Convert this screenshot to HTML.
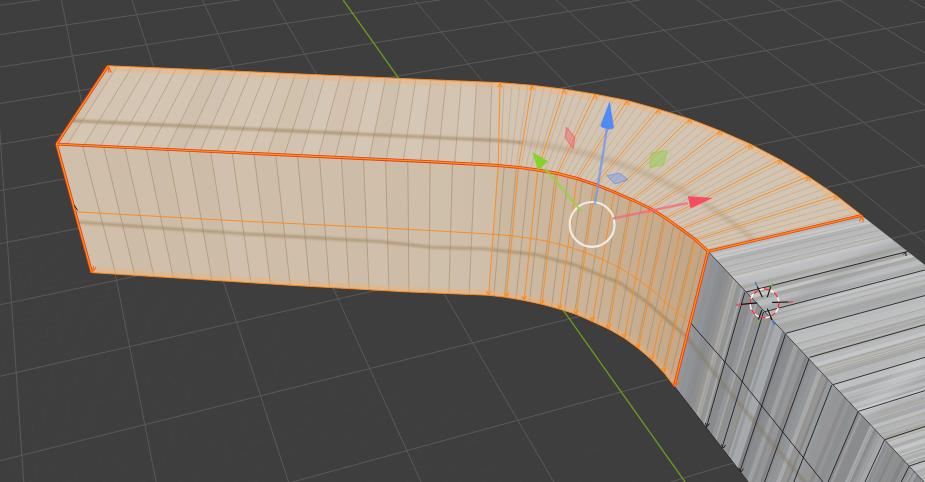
<!DOCTYPE html>
<html><head><meta charset="utf-8"><title>viewport</title>
<style>html,body{margin:0;padding:0;background:#3e3e3e;overflow:hidden}svg{display:block}</style></head>
<body><svg width="925" height="482" viewBox="0 0 925 482">
<rect width="925" height="482" fill="#3e3e3e"/>
<defs>
<linearGradient id="fade" gradientUnits="userSpaceOnUse" x1="320" y1="160" x2="260" y2="350"><stop offset="0" stop-color="#fff" stop-opacity="0"/><stop offset="1" stop-color="#fff" stop-opacity="1"/></linearGradient>
<mask id="subm"><rect width="925" height="482" fill="url(#fade)"/></mask>
<filter id="b2" x="-10%" y="-50%" width="120%" height="200%"><feGaussianBlur stdDeviation="2.2"/></filter>
<filter id="b1" x="-10%" y="-50%" width="120%" height="200%"><feGaussianBlur stdDeviation="0.9"/></filter>
<filter id="b4" x="-10%" y="-50%" width="120%" height="200%"><feGaussianBlur stdDeviation="5"/></filter>
</defs>
<g id="grid">
<path d="M-6.0 406.1L-2.5 488.0M-6.0 183.9L10.8 488.0M-2.5 -6.0L37.4 488.0M4.4 -6.0L50.7 488.0M11.4 -6.0L64.0 488.0M18.4 -6.0L77.4 488.0M25.4 -6.0L90.7 488.0M-6.0 -4.8L3.2 -6.0M32.3 -6.0L104.0 488.0M-6.0 -2.1L22.9 -6.0M39.3 -6.0L117.3 488.0M-6.0 0.6L42.7 -6.0M46.3 -6.0L130.6 488.0M-6.0 3.4L62.5 -6.0M53.3 -6.0L143.9 488.0M-6.0 8.9L102.0 -6.0M67.2 -6.0L170.6 488.0M-6.0 11.8L121.8 -6.0M74.2 -6.0L183.9 488.0M-6.0 14.6L141.6 -6.0M81.2 -6.0L197.2 488.0M-6.0 17.5L161.4 -6.0M88.2 -6.0L210.6 488.0M-6.0 20.4L181.2 -6.0M95.1 -6.0L223.9 488.0M-6.0 23.4L201.0 -6.0M102.1 -6.0L237.2 488.0M-6.0 26.3L220.8 -6.0M109.1 -6.0L250.5 488.0M-6.0 29.3L240.6 -6.0M116.1 -6.0L263.9 488.0M-6.0 32.4L260.4 -6.0M123.1 -6.0L277.2 488.0M-6.0 38.5L300.0 -6.0M137.0 -6.0L303.8 488.0M-6.0 41.7L319.8 -6.0M144.0 -6.0L317.2 488.0M-6.0 44.8L339.6 -6.0M151.0 -6.0L330.5 488.0M-6.0 48.0L359.4 -6.0M158.0 -6.0L343.8 488.0M-6.0 51.3L379.2 -6.0M164.9 -6.0L357.2 488.0M-6.0 54.6L399.1 -6.0M171.9 -6.0L370.5 488.0M-6.0 57.9L418.9 -6.0M178.9 -6.0L383.8 488.0M-6.0 61.2L438.7 -6.0M185.9 -6.0L397.1 488.0M-6.0 64.6L458.5 -6.0M192.9 -6.0L410.5 488.0M-6.0 71.5L498.2 -6.0M206.8 -6.0L437.1 488.0M-6.0 75.0L518.0 -6.0M213.8 -6.0L450.5 488.0M-6.0 78.5L537.9 -6.0M220.8 -6.0L463.8 488.0M-6.0 82.1L557.7 -6.0M227.8 -6.0L477.2 488.0M-6.0 85.7L577.6 -6.0M234.8 -6.0L490.5 488.0M-6.0 89.3L597.4 -6.0M241.8 -6.0L503.8 488.0M-6.0 93.0L617.3 -6.0M248.8 -6.0L517.2 488.0M-6.0 96.8L637.1 -6.0M255.7 -6.0L530.5 488.0M-6.0 100.6L657.0 -6.0M262.7 -6.0L543.8 488.0M-6.0 108.3L696.7 -6.0M276.7 -6.0L570.5 488.0M-6.0 112.2L716.6 -6.0M283.7 -6.0L583.9 488.0M-6.0 116.2L736.4 -6.0M290.7 -6.0L597.2 488.0M-6.0 120.2L756.3 -6.0M297.7 -6.0L610.5 488.0M-6.0 124.3L776.2 -6.0M304.7 -6.0L623.9 488.0M-6.0 128.4L796.0 -6.0M311.6 -6.0L637.2 488.0M-6.0 132.5L815.9 -6.0M318.6 -6.0L650.6 488.0M-6.0 136.8L835.8 -6.0M325.6 -6.0L663.9 488.0M-6.0 141.0L855.7 -6.0M332.6 -6.0L677.3 488.0M-6.0 149.7L895.5 -6.0M346.6 -6.0L704.0 488.0M-6.0 154.2L915.4 -6.0M353.6 -6.0L717.3 488.0M-6.0 158.7L931.0 -5.3M360.6 -6.0L730.7 488.0M-6.0 163.2L931.0 -1.7M367.6 -6.0L744.0 488.0M-6.0 167.8L931.0 1.8M374.6 -6.0L757.4 488.0M-6.0 172.5L931.0 5.4M381.6 -6.0L770.7 488.0M-6.0 177.2L931.0 9.1M388.5 -6.0L784.1 488.0M-6.0 182.0L931.0 12.7M395.5 -6.0L797.4 488.0M-6.0 186.9L931.0 16.5M402.5 -6.0L810.8 488.0M-6.0 196.8L931.0 24.1M416.5 -6.0L837.5 488.0M-6.0 201.8L931.0 28.0M423.5 -6.0L850.8 488.0M-6.0 206.9L931.0 32.0M430.5 -6.0L864.2 488.0M-6.0 212.1L931.0 36.0M437.5 -6.0L877.5 488.0M-6.0 217.4L931.0 40.0M444.5 -6.0L890.9 488.0M-6.0 222.7L931.0 44.2M451.5 -6.0L904.2 488.0M-6.0 228.2L931.0 48.3M458.5 -6.0L917.6 488.0M-6.0 233.7L931.0 52.6M465.5 -6.0L931.0 488.0M-6.0 239.2L931.0 56.9M472.5 -6.0L931.0 474.1M-6.0 250.6L931.0 65.6M486.5 -6.0L931.0 447.2M-6.0 256.4L931.0 70.1M493.5 -6.0L931.0 434.3M-6.0 262.3L931.0 74.7M500.5 -6.0L931.0 421.7M-6.0 268.3L931.0 79.3M507.5 -6.0L931.0 409.4M-6.0 274.4L931.0 83.9M514.5 -6.0L931.0 397.5M-6.0 280.5L931.0 88.7M521.5 -6.0L931.0 385.8M-6.0 286.8L931.0 93.5M528.5 -6.0L931.0 374.4M-6.0 293.1L931.0 98.4M535.5 -6.0L931.0 363.3M-6.0 299.6L931.0 103.4M542.5 -6.0L931.0 352.4M-6.0 312.8L931.0 113.6M556.5 -6.0L931.0 331.5M-6.0 319.5L931.0 118.8M563.5 -6.0L931.0 321.4M-6.0 326.4L931.0 124.1M570.5 -6.0L931.0 311.5M-6.0 333.4L931.0 129.4M577.5 -6.0L931.0 301.8M-6.0 340.5L931.0 134.9M584.5 -6.0L931.0 292.4M-6.0 347.7L931.0 140.5M591.5 -6.0L931.0 283.2M-6.0 355.0L931.0 146.1M598.5 -6.0L931.0 274.1M-6.0 362.4L931.0 151.8M605.5 -6.0L931.0 265.3M-6.0 370.0L931.0 157.7M612.5 -6.0L931.0 256.6M-6.0 385.5L931.0 169.6M626.5 -6.0L931.0 239.8M-6.0 393.4L931.0 175.7M633.5 -6.0L931.0 231.7M-6.0 401.5L931.0 182.0M640.5 -6.0L931.0 223.7M-6.0 409.7L931.0 188.3M647.5 -6.0L931.0 215.9M-6.0 418.1L931.0 194.8M654.5 -6.0L931.0 208.3M-6.0 426.6L931.0 201.3M661.5 -6.0L931.0 200.8M-6.0 435.3L931.0 208.0M668.5 -6.0L931.0 193.4M-6.0 444.1L931.0 214.8M675.5 -6.0L931.0 186.2M-6.0 453.1L931.0 221.7M682.5 -6.0L931.0 179.2M-6.0 471.5L931.0 236.0M696.6 -6.0L931.0 165.4M-6.0 481.0L931.0 243.3M703.6 -6.0L931.0 158.7M4.4 488.0L931.0 250.7M710.6 -6.0L931.0 152.2M42.4 488.0L931.0 258.3M717.6 -6.0L931.0 145.8M80.4 488.0L931.0 266.0M724.6 -6.0L931.0 139.4M118.4 488.0L931.0 273.9M731.6 -6.0L931.0 133.2M156.4 488.0L931.0 282.0M738.6 -6.0L931.0 127.1M194.4 488.0L931.0 290.2M745.6 -6.0L931.0 121.2M232.5 488.0L931.0 298.5M752.6 -6.0L931.0 115.3M308.5 488.0L931.0 315.8M766.7 -6.0L931.0 103.8M346.5 488.0L931.0 324.6M773.7 -6.0L931.0 98.2M384.6 488.0L931.0 333.7M780.7 -6.0L931.0 92.7M422.6 488.0L931.0 343.0M787.7 -6.0L931.0 87.3M460.7 488.0L931.0 352.4M794.7 -6.0L931.0 82.0M498.7 488.0L931.0 362.1M801.7 -6.0L931.0 76.8M536.8 488.0L931.0 371.9M808.7 -6.0L931.0 71.7M574.9 488.0L931.0 382.0M815.7 -6.0L931.0 66.6M612.9 488.0L931.0 392.3M822.8 -6.0L931.0 61.7M689.1 488.0L931.0 413.6M836.8 -6.0L931.0 52.0M727.2 488.0L931.0 424.6M843.8 -6.0L931.0 47.2M765.3 488.0L931.0 435.8M850.8 -6.0L931.0 42.6M803.4 488.0L931.0 447.4M857.8 -6.0L931.0 38.0M841.5 488.0L931.0 459.2M864.9 -6.0L931.0 33.4M879.6 488.0L931.0 471.2M871.9 -6.0L931.0 29.0M917.7 488.0L931.0 483.6M878.9 -6.0L931.0 24.6M885.9 -6.0L931.0 20.3M892.9 -6.0L931.0 16.0M907.0 -6.0L931.0 7.7M914.0 -6.0L931.0 3.6M921.0 -6.0L931.0 -0.4M928.0 -6.0L931.0 -4.3" stroke="#4c4c4c" stroke-width="0.7" opacity="0.3" fill="none" mask="url(#subm)"/>
<path d="M-6.0 45.5L24.1 488.0M-6.0 6.1L82.3 -6.0M60.3 -6.0L157.3 488.0M-6.0 35.4L280.2 -6.0M130.0 -6.0L290.5 488.0M-6.0 68.0L478.4 -6.0M199.9 -6.0L423.8 488.0M-6.0 104.4L676.8 -6.0M269.7 -6.0L557.2 488.0M-6.0 145.4L875.6 -6.0M-6.0 191.8L931.0 20.3M409.5 -6.0L824.1 488.0M-6.0 244.9L931.0 61.2M479.5 -6.0L931.0 460.4M-6.0 306.1L931.0 108.4M549.5 -6.0L931.0 341.8M-6.0 377.6L931.0 163.6M619.5 -6.0L931.0 248.1M-6.0 462.2L931.0 228.8M689.6 -6.0L931.0 172.2M270.5 488.0L931.0 307.1M759.7 -6.0L931.0 109.5M651.0 488.0L931.0 402.8M829.8 -6.0L931.0 56.8M899.9 -6.0L931.0 11.8" stroke="#5a5a5a" stroke-width="1" fill="none"/>
<line x1="343.2" y1="0" x2="685.1" y2="482" stroke="#699b1d" stroke-width="1.3"/>
</g>
<clipPath id="ctop"><polygon points="108.1,65.8 230.0,70.9 420.0,79.3 500.0,82.7 532.0,85.3 564.0,89.2 595.0,94.2 627.0,100.5 658.4,109.2 689.7,119.0 720.0,130.8 750.5,144.2 780.0,159.7 808.2,176.5 836.2,195.5 861.8,215.4 708.1,251.3 695.5,239.7 681.0,229.0 665.7,218.1 649.3,208.0 632.0,199.8 614.2,192.0 595.6,184.6 576.9,178.5 557.5,173.5 537.9,170.0 518.4,167.4 498.2,165.5 430.0,161.7 230.0,152.4 56.5,144.1"/></clipPath>
<clipPath id="cfront"><polygon points="56.5,144.1 230.0,152.4 430.0,161.7 498.2,165.5 518.4,167.4 537.9,170.0 557.5,173.5 576.9,178.5 595.6,184.6 614.2,192.0 632.0,199.8 649.3,208.0 665.7,218.1 681.0,229.0 695.5,239.7 708.1,251.3 674.3,386.2 663.9,372.5 651.9,360.0 638.3,348.3 624.3,338.0 608.6,328.9 592.4,321.5 576.0,314.2 559.6,309.1 541.9,304.2 524.1,300.4 506.3,297.3 488.6,295.2 403.8,291.7 300.0,285.8 91.7,272.6"/></clipPath>
<polygon points="108.1,65.8 230.0,70.9 420.0,79.3 500.0,82.7 532.0,85.3 564.0,89.2 595.0,94.2 627.0,100.5 658.4,109.2 689.7,119.0 720.0,130.8 750.5,144.2 780.0,159.7 808.2,176.5 836.2,195.5 861.8,215.4 708.1,251.3 695.5,239.7 681.0,229.0 665.7,218.1 649.3,208.0 632.0,199.8 614.2,192.0 595.6,184.6 576.9,178.5 557.5,173.5 537.9,170.0 518.4,167.4 498.2,165.5 430.0,161.7 230.0,152.4 56.5,144.1" fill="#d4c5b3"/>
<linearGradient id="fg" gradientUnits="userSpaceOnUse" x1="460" y1="0" x2="705" y2="0"><stop offset="0" stop-color="#c8ac8c" stop-opacity="0"/><stop offset="0.55" stop-color="#c8ac8c" stop-opacity="0.65"/><stop offset="1" stop-color="#c2a380" stop-opacity="0.95"/></linearGradient>
<polygon points="56.5,144.1 230.0,152.4 430.0,161.7 498.2,165.5 518.4,167.4 537.9,170.0 557.5,173.5 576.9,178.5 595.6,184.6 614.2,192.0 632.0,199.8 649.3,208.0 665.7,218.1 681.0,229.0 695.5,239.7 708.1,251.3 674.3,386.2 663.9,372.5 651.9,360.0 638.3,348.3 624.3,338.0 608.6,328.9 592.4,321.5 576.0,314.2 559.6,309.1 541.9,304.2 524.1,300.4 506.3,297.3 488.6,295.2 403.8,291.7 300.0,285.8 91.7,272.6" fill="#cfbfab"/>
<polygon points="56.5,144.1 230.0,152.4 430.0,161.7 498.2,165.5 518.4,167.4 537.9,170.0 557.5,173.5 576.9,178.5 595.6,184.6 614.2,192.0 632.0,199.8 649.3,208.0 665.7,218.1 681.0,229.0 695.5,239.7 708.1,251.3 674.3,386.2 663.9,372.5 651.9,360.0 638.3,348.3 624.3,338.0 608.6,328.9 592.4,321.5 576.0,314.2 559.6,309.1 541.9,304.2 524.1,300.4 506.3,297.3 488.6,295.2 403.8,291.7 300.0,285.8 91.7,272.6" fill="url(#fg)"/>
<g clip-path="url(#ctop)">
<polyline points="71.9,120.6 132.9,123.5 193.9,126.3 254.9,129.1 315.9,132.0 376.8,134.8 437.8,137.7 498.7,140.5 522.5,142.8" stroke="#8a6c3a" stroke-width="2.8" fill="none" opacity="0.5" filter="url(#b1)"/>
<polyline points="522.5,142.8 545.7,145.8 568.8,149.7 591.9,155.1 614.4,162.0 636.9,170.1 658.4,179.1 679.7,188.9 700.0,200.6 719.2,213.2 737.7,226.4 754.2,240.5" stroke="#8a6c3a" stroke-width="4.5" fill="none" opacity="0.25" filter="url(#b2)"/>
<g stroke="#a58a64" stroke-width="0.9" opacity="0.62">
<polygon points="50.7,143.8 102.6,65.6 117.3,66.2 67.2,144.6" fill="#8a6a40" fill-opacity="0.059" stroke="none"/>
<line x1="67.2" y1="144.6" x2="117.3" y2="66.2" />
<polygon points="67.2,144.6 117.3,66.2 132.0,66.8 83.7,145.4" fill="#ffffff" fill-opacity="0.039" stroke="none"/>
<line x1="83.7" y1="145.4" x2="132.0" y2="66.8" />
<polygon points="83.7,145.4 132.0,66.8 146.8,67.5 100.3,146.2" fill="#8a6a40" fill-opacity="0.009" stroke="none"/>
<line x1="100.3" y1="146.2" x2="146.8" y2="67.5" />
<polygon points="100.3,146.2 146.8,67.5 161.5,68.1 116.9,147.0" fill="#ffffff" fill-opacity="0.031" stroke="none"/>
<line x1="116.9" y1="147.0" x2="161.5" y2="68.1" />
<polygon points="116.9,147.0 161.5,68.1 176.3,68.7 133.5,147.8" fill="#ffffff" fill-opacity="0.067" stroke="none"/>
<line x1="133.5" y1="147.8" x2="176.3" y2="68.7" />
<polygon points="133.5,147.8 176.3,68.7 191.1,69.4 150.2,148.6" fill="#ffffff" fill-opacity="0.005" stroke="none"/>
<line x1="150.2" y1="148.6" x2="191.1" y2="69.4" />
<polygon points="150.2,148.6 191.1,69.4 205.9,70.0 166.8,149.4" fill="#ffffff" fill-opacity="0.000" stroke="none"/>
<line x1="166.8" y1="149.4" x2="205.9" y2="70.0" />
<polygon points="166.8,149.4 205.9,70.0 220.8,70.7 183.5,150.2" fill="#8a6a40" fill-opacity="0.060" stroke="none"/>
<line x1="183.5" y1="150.2" x2="220.8" y2="70.7" />
<polygon points="183.5,150.2 220.8,70.7 235.7,71.3 200.3,151.0" fill="#8a6a40" fill-opacity="0.032" stroke="none"/>
<line x1="200.3" y1="151.0" x2="235.7" y2="71.3" />
<polygon points="200.3,151.0 235.7,71.3 250.6,71.9 217.0,151.8" fill="#8a6a40" fill-opacity="0.000" stroke="none"/>
<line x1="217.0" y1="151.8" x2="250.6" y2="71.9" />
<polygon points="217.0,151.8 250.6,71.9 265.5,72.6 233.8,152.6" fill="#ffffff" fill-opacity="0.025" stroke="none"/>
<line x1="233.8" y1="152.6" x2="265.5" y2="72.6" />
<polygon points="233.8,152.6 265.5,72.6 280.4,73.2 250.6,153.4" fill="#ffffff" fill-opacity="0.043" stroke="none"/>
<line x1="250.6" y1="153.4" x2="280.4" y2="73.2" />
<polygon points="250.6,153.4 280.4,73.2 295.4,73.9 267.5,154.2" fill="#8a6a40" fill-opacity="0.017" stroke="none"/>
<line x1="267.5" y1="154.2" x2="295.4" y2="73.9" />
<polygon points="267.5,154.2 295.4,73.9 310.4,74.5 284.4,155.0" fill="#8a6a40" fill-opacity="0.061" stroke="none"/>
<line x1="284.4" y1="155.0" x2="310.4" y2="74.5" />
<polygon points="284.4,155.0 310.4,74.5 325.4,75.2 301.3,155.8" fill="#8a6a40" fill-opacity="0.030" stroke="none"/>
<line x1="301.3" y1="155.8" x2="325.4" y2="75.2" />
<polygon points="301.3,155.8 325.4,75.2 340.4,75.8 318.2,156.7" fill="#ffffff" fill-opacity="0.057" stroke="none"/>
<line x1="318.2" y1="156.7" x2="340.4" y2="75.8" />
<polygon points="318.2,156.7 340.4,75.8 355.4,76.5 335.1,157.5" fill="#8a6a40" fill-opacity="0.040" stroke="none"/>
<line x1="335.1" y1="157.5" x2="355.4" y2="76.5" />
<polygon points="335.1,157.5 355.4,76.5 370.5,77.1 352.1,158.3" fill="#8a6a40" fill-opacity="0.007" stroke="none"/>
<line x1="352.1" y1="158.3" x2="370.5" y2="77.1" />
<polygon points="352.1,158.3 370.5,77.1 385.6,77.8 369.2,159.1" fill="#ffffff" fill-opacity="0.060" stroke="none"/>
<line x1="369.2" y1="159.1" x2="385.6" y2="77.8" />
<polygon points="369.2,159.1 385.6,77.8 400.7,78.4 386.2,159.9" fill="#8a6a40" fill-opacity="0.067" stroke="none"/>
<line x1="386.2" y1="159.9" x2="400.7" y2="78.4" />
<polygon points="386.2,159.9 400.7,78.4 415.8,79.1 403.3,160.7" fill="#ffffff" fill-opacity="0.014" stroke="none"/>
<line x1="403.3" y1="160.7" x2="415.8" y2="79.1" />
<polygon points="403.3,160.7 415.8,79.1 431.0,79.7 420.4,161.6" fill="#ffffff" fill-opacity="0.063" stroke="none"/>
<line x1="420.4" y1="161.6" x2="431.0" y2="79.7" />
<polygon points="420.4,161.6 431.0,79.7 446.2,80.4 437.5,162.4" fill="#8a6a40" fill-opacity="0.038" stroke="none"/>
<line x1="437.5" y1="162.4" x2="446.2" y2="80.4" />
<polygon points="437.5,162.4 446.2,80.4 461.4,81.0 454.7,163.2" fill="#ffffff" fill-opacity="0.007" stroke="none"/>
<line x1="454.7" y1="163.2" x2="461.4" y2="81.0" />
<polygon points="454.7,163.2 461.4,81.0 476.6,81.7 471.8,164.0" fill="#ffffff" fill-opacity="0.057" stroke="none"/>
<line x1="471.8" y1="164.0" x2="476.6" y2="81.7" />
<polygon points="471.8,164.0 476.6,81.7 491.8,82.3 489.1,164.9" fill="#8a6a40" fill-opacity="0.051" stroke="none"/>
<line x1="489.1" y1="164.9" x2="491.8" y2="82.3" />
<polygon points="489.1,164.9 491.8,82.3 507.1,83.0 506.3,165.7" fill="#ffffff" fill-opacity="0.003" stroke="none"/>
</g>
<g stroke="#a58a64" stroke-width="0.8" opacity="0.4">
<line x1="500.7" y1="165.7" x2="504.0" y2="83.0" />
<line x1="505.8" y1="166.2" x2="512.0" y2="83.7" />
<line x1="510.8" y1="166.7" x2="520.0" y2="84.3" />
<line x1="515.9" y1="167.2" x2="528.0" y2="85.0" />
<line x1="520.8" y1="167.7" x2="536.0" y2="85.8" />
<line x1="525.7" y1="168.4" x2="544.0" y2="86.8" />
<line x1="530.6" y1="169.0" x2="552.0" y2="87.7" />
<line x1="535.5" y1="169.7" x2="560.0" y2="88.7" />
<line x1="540.4" y1="170.4" x2="567.9" y2="89.8" />
<line x1="545.2" y1="171.3" x2="575.6" y2="91.1" />
<line x1="550.1" y1="172.2" x2="583.4" y2="92.3" />
<line x1="555.0" y1="173.1" x2="591.1" y2="93.6" />
<line x1="559.9" y1="174.1" x2="599.0" y2="95.0" />
<line x1="564.8" y1="175.4" x2="607.0" y2="96.6" />
<line x1="569.6" y1="176.6" x2="615.0" y2="98.1" />
<line x1="574.5" y1="177.9" x2="623.0" y2="99.7" />
<line x1="579.2" y1="179.3" x2="630.9" y2="101.6" />
<line x1="583.9" y1="180.8" x2="638.8" y2="103.8" />
<line x1="588.6" y1="182.3" x2="646.6" y2="105.9" />
<line x1="593.3" y1="183.8" x2="654.5" y2="108.1" />
<line x1="597.9" y1="185.5" x2="662.3" y2="110.4" />
<line x1="602.6" y1="187.4" x2="670.1" y2="112.9" />
<line x1="607.2" y1="189.2" x2="678.0" y2="115.3" />
<line x1="611.9" y1="191.1" x2="685.8" y2="117.8" />
<line x1="616.4" y1="193.0" x2="693.5" y2="120.5" />
<line x1="620.9" y1="194.9" x2="701.1" y2="123.4" />
<line x1="625.3" y1="196.9" x2="708.6" y2="126.4" />
<line x1="629.8" y1="198.8" x2="716.2" y2="129.3" />
<line x1="634.2" y1="200.8" x2="723.8" y2="132.5" />
<line x1="638.5" y1="202.9" x2="731.4" y2="135.8" />
<line x1="642.8" y1="204.9" x2="739.1" y2="139.2" />
<line x1="647.1" y1="207.0" x2="746.7" y2="142.5" />
<line x1="651.3" y1="209.3" x2="754.2" y2="146.1" />
<line x1="655.5" y1="211.8" x2="761.6" y2="150.0" />
<line x1="659.5" y1="214.3" x2="768.9" y2="153.9" />
<line x1="663.7" y1="216.8" x2="776.3" y2="157.8" />
<line x1="667.6" y1="219.5" x2="783.5" y2="161.8" />
<line x1="671.4" y1="222.2" x2="790.6" y2="166.0" />
<line x1="675.3" y1="224.9" x2="797.6" y2="170.2" />
<line x1="679.1" y1="227.6" x2="804.7" y2="174.4" />
<line x1="682.8" y1="230.3" x2="811.7" y2="178.9" />
<line x1="686.4" y1="233.0" x2="818.7" y2="183.6" />
<line x1="690.1" y1="235.7" x2="825.7" y2="188.4" />
<line x1="693.7" y1="238.4" x2="832.7" y2="193.1" />
<line x1="697.1" y1="241.1" x2="839.4" y2="198.0" />
<line x1="700.2" y1="244.1" x2="845.8" y2="203.0" />
<line x1="703.4" y1="246.9" x2="852.2" y2="207.9" />
<line x1="706.5" y1="249.9" x2="858.6" y2="212.9" />
</g>
<polyline points="108.1,65.8 230.0,70.9 420.0,79.3 500.0,82.7 532.0,85.3 564.0,89.2 595.0,94.2 627.0,100.5 658.4,109.2 689.7,119.0 720.0,130.8 750.5,144.2 780.0,159.7 808.2,176.5 836.2,195.5 861.8,215.4" stroke="#f0b27a" stroke-width="11" fill="none" opacity="0.42"/>
</g>
<g clip-path="url(#cfront)">
<polyline points="75.0,222.0 240.0,233.5 380.0,241.5 431.9,247.2 483.8,248.8 535.7,254.5 574.6,264.9 620.0,283.0 648.0,303.0 670.6,323.0 688.0,338.0" stroke="#8a6c3a" stroke-width="2.6" fill="none" opacity="0.47" filter="url(#b1)"/>
<g stroke="#a58a64" stroke-width="1" opacity="0.62">
<polygon points="40.2,143.3 85.6,299.3 104.1,300.2 61.3,144.3" fill="#ffffff" fill-opacity="0.035" stroke="none"/>
<polygon points="61.3,144.3 104.1,300.2 122.7,301.1 82.4,145.3" fill="#ffffff" fill-opacity="0.024" stroke="none"/>
<line x1="82.4" y1="145.3" x2="122.7" y2="301.1" />
<polygon points="82.4,145.3 122.7,301.1 141.3,302.0 103.6,146.4" fill="#8a6a40" fill-opacity="0.005" stroke="none"/>
<line x1="103.6" y1="146.4" x2="141.3" y2="302.0" />
<polygon points="103.6,146.4 141.3,302.0 160.0,302.9 124.8,147.4" fill="#8a6a40" fill-opacity="0.041" stroke="none"/>
<line x1="124.8" y1="147.4" x2="160.0" y2="302.9" />
<polygon points="124.8,147.4 160.0,302.9 178.8,303.8 146.2,148.4" fill="#8a6a40" fill-opacity="0.001" stroke="none"/>
<line x1="146.2" y1="148.4" x2="178.8" y2="303.8" />
<polygon points="146.2,148.4 178.8,303.8 197.6,304.7 167.6,149.4" fill="#8a6a40" fill-opacity="0.018" stroke="none"/>
<line x1="167.6" y1="149.4" x2="197.6" y2="304.7" />
<polygon points="167.6,149.4 197.6,304.7 216.5,305.6 189.1,150.5" fill="#8a6a40" fill-opacity="0.003" stroke="none"/>
<line x1="189.1" y1="150.5" x2="216.5" y2="305.6" />
<polygon points="189.1,150.5 216.5,305.6 235.5,306.5 210.6,151.5" fill="#8a6a40" fill-opacity="0.019" stroke="none"/>
<line x1="210.6" y1="151.5" x2="235.5" y2="306.5" />
<polygon points="210.6,151.5 235.5,306.5 254.5,307.4 232.2,152.5" fill="#ffffff" fill-opacity="0.047" stroke="none"/>
<line x1="232.2" y1="152.5" x2="254.5" y2="307.4" />
<polygon points="232.2,152.5 254.5,307.4 273.6,308.3 253.9,153.6" fill="#ffffff" fill-opacity="0.038" stroke="none"/>
<line x1="253.9" y1="153.6" x2="273.6" y2="308.3" />
<polygon points="253.9,153.6 273.6,308.3 292.8,309.2 275.7,154.6" fill="#8a6a40" fill-opacity="0.026" stroke="none"/>
<line x1="275.7" y1="154.6" x2="292.8" y2="309.2" />
<polygon points="275.7,154.6 292.8,309.2 312.0,310.1 297.5,155.7" fill="#ffffff" fill-opacity="0.010" stroke="none"/>
<line x1="297.5" y1="155.7" x2="312.0" y2="310.1" />
<polygon points="297.5,155.7 312.0,310.1 331.3,311.1 319.5,156.7" fill="#8a6a40" fill-opacity="0.031" stroke="none"/>
<line x1="319.5" y1="156.7" x2="331.3" y2="311.1" />
<polygon points="319.5,156.7 331.3,311.1 350.6,312.0 341.4,157.8" fill="#8a6a40" fill-opacity="0.007" stroke="none"/>
<line x1="341.4" y1="157.8" x2="350.6" y2="312.0" />
<polygon points="341.4,157.8 350.6,312.0 370.0,312.9 363.5,158.8" fill="#8a6a40" fill-opacity="0.021" stroke="none"/>
<line x1="363.5" y1="158.8" x2="370.0" y2="312.9" />
<polygon points="363.5,158.8 370.0,312.9 389.5,313.9 385.6,159.9" fill="#ffffff" fill-opacity="0.022" stroke="none"/>
<line x1="385.6" y1="159.9" x2="389.5" y2="313.9" />
<polygon points="385.6,159.9 389.5,313.9 409.1,314.8 407.8,161.0" fill="#8a6a40" fill-opacity="0.018" stroke="none"/>
<line x1="407.8" y1="161.0" x2="409.1" y2="314.8" />
<polygon points="407.8,161.0 409.1,314.8 428.7,315.7 430.1,162.0" fill="#8a6a40" fill-opacity="0.006" stroke="none"/>
<line x1="430.1" y1="162.0" x2="428.7" y2="315.7" />
<polygon points="430.1,162.0 428.7,315.7 448.3,316.7 452.5,163.1" fill="#ffffff" fill-opacity="0.031" stroke="none"/>
<line x1="452.5" y1="163.1" x2="448.3" y2="316.7" />
<polygon points="452.5,163.1 448.3,316.7 468.1,317.6 474.9,164.2" fill="#8a6a40" fill-opacity="0.012" stroke="none"/>
<line x1="474.9" y1="164.2" x2="468.1" y2="317.6" />
<polygon points="474.9,164.2 468.1,317.6 487.9,318.6 497.4,165.3" fill="#ffffff" fill-opacity="0.057" stroke="none"/>
<polygon points="497.4,165.3 487.9,318.6 507.7,319.5 520.0,166.3" fill="#8a6a40" fill-opacity="0.045" stroke="none"/>
<line x1="504.3" y1="166.1" x2="493.9" y2="295.8" />
<line x1="516.4" y1="167.2" x2="504.5" y2="297.1" />
<line x1="529.1" y1="168.8" x2="516.1" y2="299.0" />
<line x1="543.8" y1="171.1" x2="529.4" y2="301.5" />
<line x1="555.5" y1="173.2" x2="540.1" y2="303.8" />
<line x1="568.2" y1="176.2" x2="551.6" y2="306.9" />
<line x1="582.5" y1="180.3" x2="564.5" y2="310.6" />
<line x1="593.7" y1="184.0" x2="574.4" y2="313.7" />
<line x1="605.8" y1="188.7" x2="585.0" y2="318.2" />
<line x1="619.5" y1="194.3" x2="597.3" y2="323.7" />
<line x1="630.2" y1="199.0" x2="607.0" y2="328.2" />
<line x1="641.5" y1="204.3" x2="617.2" y2="333.9" />
<line x1="654.2" y1="211.0" x2="628.5" y2="341.1" />
<line x1="664.1" y1="217.1" x2="636.9" y2="347.3" />
<line x1="674.1" y1="224.1" x2="645.8" y2="354.7" />
<line x1="685.4" y1="232.2" x2="655.5" y2="363.8" />
<line x1="694.0" y1="238.6" x2="662.7" y2="371.2" />
<line x1="702.4" y1="246.1" x2="669.6" y2="380.0" />
</g>
<polyline points="91.7,272.6 300.0,285.8 403.8,291.7 488.6,295.2 506.3,297.3 524.1,300.4 541.9,304.2 559.6,309.1 576.0,314.2 592.4,321.5 608.6,328.9 624.3,338.0 638.3,348.3 651.9,360.0 663.9,372.5 674.3,386.2" stroke="#f2ae6c" stroke-width="10" fill="none" opacity="0.4"/>
</g>
<clipPath id="cgt"><polygon points="708.1,251.3 861.8,215.4 925.0,265.0 925.0,483.0"/></clipPath>
<clipPath id="cgf"><polygon points="708.1,251.3 925.0,483.0 749.0,483.0 674.3,386.2"/></clipPath>
<polygon points="708.1,251.3 861.8,215.4 925.0,265.0 925.0,483.0" fill="#b8babc"/>
<polygon points="708.1,251.3 925.0,483.0 749.0,483.0 674.3,386.2" fill="#95989b"/>
<g clip-path="url(#cgt)">
<polygon points="708.1,251.3 709.5,252.8 1481.3,73.8 1480.3,72.7" fill="#bcbec0" fill-opacity="0.85"/>
<polygon points="709.5,252.8 711.4,254.8 1482.6,75.1 1481.3,73.8" fill="#b0b2b4" fill-opacity="0.85"/>
<polygon points="711.4,254.8 713.8,257.4 1484.3,77.0 1482.6,75.1" fill="#bfc1c3" fill-opacity="0.85"/>
<polygon points="713.8,257.4 716.0,259.7 1485.8,78.6 1484.3,77.0" fill="#c6c8c9" fill-opacity="0.85"/>
<line x1="713.8" y1="257.4" x2="1484.3" y2="77.0" stroke="#a89f8c" stroke-width="0.8" opacity="0.8"/>
<polygon points="716.0,259.7 717.0,260.8 1486.5,79.4 1485.8,78.6" fill="#a8aaac" fill-opacity="0.85"/>
<polygon points="717.0,260.8 718.5,262.4 1487.6,80.5 1486.5,79.4" fill="#b0b2b4" fill-opacity="0.85"/>
<polygon points="718.5,262.4 720.1,264.1 1488.7,81.7 1487.6,80.5" fill="#b4b6b8" fill-opacity="0.85"/>
<line x1="718.5" y1="262.4" x2="1487.6" y2="80.5" stroke="#a89f8c" stroke-width="0.8" opacity="0.8"/>
<polygon points="720.1,264.1 723.3,267.5 1490.9,84.0 1488.7,81.7" fill="#b8babc" fill-opacity="0.85"/>
<polygon points="723.3,267.5 725.7,270.1 1492.6,85.9 1490.9,84.0" fill="#b8babc" fill-opacity="0.85"/>
<line x1="723.3" y1="267.5" x2="1490.9" y2="84.0" stroke="#a89f8c" stroke-width="0.8" opacity="0.8"/>
<polygon points="725.7,270.1 726.8,271.3 1493.4,86.7 1492.6,85.9" fill="#b8babc" fill-opacity="0.85"/>
<polygon points="726.8,271.3 728.0,272.6 1494.2,87.6 1493.4,86.7" fill="#c6c8c9" fill-opacity="0.85"/>
<polygon points="728.0,272.6 730.4,275.1 1495.9,89.4 1494.2,87.6" fill="#b8babc" fill-opacity="0.85"/>
<line x1="728.0" y1="272.6" x2="1494.2" y2="87.6" stroke="#a89f8c" stroke-width="0.8" opacity="0.8"/>
<polygon points="730.4,275.1 731.3,276.1 1496.5,90.1 1495.9,89.4" fill="#bfc1c3" fill-opacity="0.85"/>
<polygon points="731.3,276.1 734.4,279.4 1498.7,92.4 1496.5,90.1" fill="#c6c8c9" fill-opacity="0.85"/>
<line x1="731.3" y1="276.1" x2="1496.5" y2="90.1" stroke="#a89f8c" stroke-width="0.8" opacity="0.8"/>
<polygon points="734.4,279.4 736.7,281.9 1500.3,94.1 1498.7,92.4" fill="#bfc1c3" fill-opacity="0.85"/>
<polygon points="736.7,281.9 739.7,285.1 1502.4,96.4 1500.3,94.1" fill="#bcbec0" fill-opacity="0.85"/>
<polygon points="739.7,285.1 741.3,286.7 1503.5,97.5 1502.4,96.4" fill="#b4b6b8" fill-opacity="0.85"/>
<polygon points="741.3,286.7 742.7,288.2 1504.5,98.6 1503.5,97.5" fill="#a8aaac" fill-opacity="0.85"/>
<line x1="741.3" y1="286.7" x2="1503.5" y2="97.5" stroke="#a89f8c" stroke-width="0.8" opacity="0.8"/>
<polygon points="742.7,288.2 744.8,290.5 1505.9,100.1 1504.5,98.6" fill="#b0b2b4" fill-opacity="0.85"/>
<line x1="742.7" y1="288.2" x2="1504.5" y2="98.6" stroke="#a89f8c" stroke-width="0.8" opacity="0.8"/>
<polygon points="744.8,290.5 746.1,291.9 1506.9,101.1 1505.9,100.1" fill="#b8babc" fill-opacity="0.85"/>
<polygon points="746.1,291.9 749.0,294.9 1508.9,103.3 1506.9,101.1" fill="#a2a4a6" fill-opacity="0.85"/>
<line x1="746.1" y1="291.9" x2="1506.9" y2="101.1" stroke="#a89f8c" stroke-width="0.8" opacity="0.8"/>
<polygon points="749.0,294.9 752.3,298.5 1511.2,105.7 1508.9,103.3" fill="#c6c8c9" fill-opacity="0.85"/>
<line x1="749.0" y1="294.9" x2="1508.9" y2="103.3" stroke="#a89f8c" stroke-width="0.8" opacity="0.8"/>
<polygon points="752.3,298.5 753.8,300.1 1512.2,106.9 1511.2,105.7" fill="#a2a4a6" fill-opacity="0.85"/>
<line x1="752.3" y1="298.5" x2="1511.2" y2="105.7" stroke="#a89f8c" stroke-width="0.8" opacity="0.8"/>
<polygon points="753.8,300.1 755.2,301.6 1513.3,108.0 1512.2,106.9" fill="#a2a4a6" fill-opacity="0.85"/>
<polygon points="755.2,301.6 757.8,304.3 1515.0,109.8 1513.3,108.0" fill="#b8babc" fill-opacity="0.85"/>
<polygon points="757.8,304.3 759.1,305.8 1516.0,110.9 1515.0,109.8" fill="#bfc1c3" fill-opacity="0.85"/>
<polygon points="759.1,305.8 760.2,307.0 1516.8,111.7 1516.0,110.9" fill="#b4b6b8" fill-opacity="0.85"/>
<polygon points="760.2,307.0 762.6,309.5 1518.4,113.5 1516.8,111.7" fill="#a8aaac" fill-opacity="0.85"/>
<polygon points="762.6,309.5 763.6,310.6 1519.1,114.2 1518.4,113.5" fill="#a2a4a6" fill-opacity="0.85"/>
<polygon points="763.6,310.6 766.1,313.3 1520.9,116.1 1519.1,114.2" fill="#bcbec0" fill-opacity="0.85"/>
<polygon points="766.1,313.3 767.9,315.2 1522.1,117.4 1520.9,116.1" fill="#c6c8c9" fill-opacity="0.85"/>
<polygon points="767.9,315.2 769.4,316.7 1523.2,118.5 1522.1,117.4" fill="#b0b2b4" fill-opacity="0.85"/>
<polygon points="769.4,316.7 772.7,320.3 1525.5,121.0 1523.2,118.5" fill="#bfc1c3" fill-opacity="0.85"/>
<polygon points="772.7,320.3 776.1,324.0 1527.9,123.6 1525.5,121.0" fill="#b8babc" fill-opacity="0.85"/>
<line x1="772.7" y1="320.3" x2="1525.5" y2="121.0" stroke="#a89f8c" stroke-width="0.8" opacity="0.8"/>
<polygon points="776.1,324.0 778.0,326.0 1529.2,125.0 1527.9,123.6" fill="#a8aaac" fill-opacity="0.85"/>
<polygon points="778.0,326.0 779.0,327.0 1529.9,125.7 1529.2,125.0" fill="#a2a4a6" fill-opacity="0.85"/>
<line x1="778.0" y1="326.0" x2="1529.2" y2="125.0" stroke="#a89f8c" stroke-width="0.8" opacity="0.8"/>
<polygon points="779.0,327.0 782.1,330.3 1532.1,128.0 1529.9,125.7" fill="#a2a4a6" fill-opacity="0.85"/>
<polygon points="782.1,330.3 784.8,333.2 1533.9,130.0 1532.1,128.0" fill="#a8aaac" fill-opacity="0.85"/>
<polygon points="784.8,333.2 786.8,335.4 1535.4,131.6 1533.9,130.0" fill="#bcbec0" fill-opacity="0.85"/>
<polygon points="786.8,335.4 788.9,337.6 1536.8,133.1 1535.4,131.6" fill="#b8babc" fill-opacity="0.85"/>
<polygon points="788.9,337.6 792.4,341.3 1539.2,135.7 1536.8,133.1" fill="#bcbec0" fill-opacity="0.85"/>
<polygon points="792.4,341.3 795.2,344.3 1541.2,137.8 1539.2,135.7" fill="#bfc1c3" fill-opacity="0.85"/>
<polygon points="795.2,344.3 797.9,347.2 1543.1,139.8 1541.2,137.8" fill="#b8babc" fill-opacity="0.85"/>
<line x1="795.2" y1="344.3" x2="1541.2" y2="137.8" stroke="#a89f8c" stroke-width="0.8" opacity="0.8"/>
<polygon points="797.9,347.2 800.2,349.7 1544.8,141.6 1543.1,139.8" fill="#bcbec0" fill-opacity="0.85"/>
<polygon points="800.2,349.7 802.2,351.8 1546.1,143.0 1544.8,141.6" fill="#a2a4a6" fill-opacity="0.85"/>
<polygon points="802.2,351.8 803.4,353.1 1547.0,144.0 1546.1,143.0" fill="#b4b6b8" fill-opacity="0.85"/>
<polygon points="803.4,353.1 806.0,355.9 1548.8,145.9 1547.0,144.0" fill="#a8aaac" fill-opacity="0.85"/>
<line x1="803.4" y1="353.1" x2="1547.0" y2="144.0" stroke="#a89f8c" stroke-width="0.8" opacity="0.8"/>
<polygon points="806.0,355.9 807.2,357.1 1549.6,146.8 1548.8,145.9" fill="#bcbec0" fill-opacity="0.85"/>
<polygon points="807.2,357.1 809.9,360.0 1551.5,148.8 1549.6,146.8" fill="#b0b2b4" fill-opacity="0.85"/>
<line x1="807.2" y1="357.1" x2="1549.6" y2="146.8" stroke="#a89f8c" stroke-width="0.8" opacity="0.8"/>
<polygon points="809.9,360.0 812.3,362.6 1553.2,150.6 1551.5,148.8" fill="#b8babc" fill-opacity="0.85"/>
<polygon points="812.3,362.6 813.4,363.8 1554.0,151.4 1553.2,150.6" fill="#b8babc" fill-opacity="0.85"/>
<polygon points="813.4,363.8 816.5,367.0 1556.1,153.7 1554.0,151.4" fill="#c6c8c9" fill-opacity="0.85"/>
<polygon points="816.5,367.0 817.5,368.1 1556.8,154.5 1556.1,153.7" fill="#a2a4a6" fill-opacity="0.85"/>
<polygon points="817.5,368.1 820.1,370.9 1558.7,156.5 1556.8,154.5" fill="#b4b6b8" fill-opacity="0.85"/>
<line x1="817.5" y1="368.1" x2="1556.8" y2="154.5" stroke="#a89f8c" stroke-width="0.8" opacity="0.8"/>
<polygon points="820.1,370.9 821.6,372.5 1559.7,157.6 1558.7,156.5" fill="#bfc1c3" fill-opacity="0.85"/>
<line x1="820.1" y1="370.9" x2="1558.7" y2="156.5" stroke="#a89f8c" stroke-width="0.8" opacity="0.8"/>
<polygon points="821.6,372.5 822.7,373.8 1560.5,158.4 1559.7,157.6" fill="#b0b2b4" fill-opacity="0.85"/>
<line x1="821.6" y1="372.5" x2="1559.7" y2="157.6" stroke="#a89f8c" stroke-width="0.8" opacity="0.8"/>
<polygon points="822.7,373.8 825.7,376.9 1562.6,160.7 1560.5,158.4" fill="#a2a4a6" fill-opacity="0.85"/>
<polygon points="825.7,376.9 828.9,380.3 1564.8,163.0 1562.6,160.7" fill="#b4b6b8" fill-opacity="0.85"/>
<line x1="825.7" y1="376.9" x2="1562.6" y2="160.7" stroke="#a89f8c" stroke-width="0.8" opacity="0.8"/>
<polygon points="828.9,380.3 832.3,383.9 1567.2,165.6 1564.8,163.0" fill="#b4b6b8" fill-opacity="0.85"/>
<polygon points="832.3,383.9 835.0,386.9 1569.1,167.6 1567.2,165.6" fill="#bfc1c3" fill-opacity="0.85"/>
<polygon points="835.0,386.9 838.5,390.6 1571.5,170.2 1569.1,167.6" fill="#bfc1c3" fill-opacity="0.85"/>
<polygon points="838.5,390.6 841.8,394.1 1573.8,172.7 1571.5,170.2" fill="#a2a4a6" fill-opacity="0.85"/>
<polygon points="841.8,394.1 843.3,395.7 1574.9,173.8 1573.8,172.7" fill="#bcbec0" fill-opacity="0.85"/>
<polygon points="843.3,395.7 846.5,399.1 1577.1,176.2 1574.9,173.8" fill="#b4b6b8" fill-opacity="0.85"/>
<polygon points="846.5,399.1 848.5,401.3 1578.6,177.7 1577.1,176.2" fill="#b4b6b8" fill-opacity="0.85"/>
<line x1="846.5" y1="399.1" x2="1577.1" y2="176.2" stroke="#a89f8c" stroke-width="0.8" opacity="0.8"/>
<polygon points="848.5,401.3 851.3,404.2 1580.5,179.8 1578.6,177.7" fill="#a2a4a6" fill-opacity="0.85"/>
<polygon points="851.3,404.2 854.2,407.4 1582.5,182.0 1580.5,179.8" fill="#b8babc" fill-opacity="0.85"/>
<polygon points="854.2,407.4 856.2,409.5 1583.9,183.4 1582.5,182.0" fill="#a2a4a6" fill-opacity="0.85"/>
<polygon points="856.2,409.5 859.0,412.5 1585.9,185.6 1583.9,183.4" fill="#c6c8c9" fill-opacity="0.85"/>
<polygon points="859.0,412.5 861.9,415.6 1587.9,187.7 1585.9,185.6" fill="#b4b6b8" fill-opacity="0.85"/>
<polygon points="861.9,415.6 863.6,417.4 1589.1,189.0 1587.9,187.7" fill="#a8aaac" fill-opacity="0.85"/>
<polygon points="863.6,417.4 866.5,420.5 1591.1,191.1 1589.1,189.0" fill="#a8aaac" fill-opacity="0.85"/>
<line x1="863.6" y1="417.4" x2="1589.1" y2="189.0" stroke="#a89f8c" stroke-width="0.8" opacity="0.8"/>
<polygon points="866.5,420.5 867.7,421.8 1592.0,192.0 1591.1,191.1" fill="#b8babc" fill-opacity="0.85"/>
<line x1="866.5" y1="420.5" x2="1591.1" y2="191.1" stroke="#a89f8c" stroke-width="0.8" opacity="0.8"/>
<polygon points="867.7,421.8 868.8,423.0 1592.8,192.9 1592.0,192.0" fill="#a2a4a6" fill-opacity="0.85"/>
<polygon points="868.8,423.0 871.3,425.6 1594.5,194.7 1592.8,192.9" fill="#a2a4a6" fill-opacity="0.85"/>
<polygon points="871.3,425.6 874.3,428.9 1596.6,197.0 1594.5,194.7" fill="#bcbec0" fill-opacity="0.85"/>
<polygon points="874.3,428.9 877.1,431.8 1598.6,199.1 1596.6,197.0" fill="#b0b2b4" fill-opacity="0.85"/>
<line x1="874.3" y1="428.9" x2="1596.6" y2="197.0" stroke="#a89f8c" stroke-width="0.8" opacity="0.8"/>
<polygon points="877.1,431.8 879.6,434.6 1600.4,201.0 1598.6,199.1" fill="#b4b6b8" fill-opacity="0.85"/>
<polygon points="879.6,434.6 882.5,437.6 1602.4,203.1 1600.4,201.0" fill="#b0b2b4" fill-opacity="0.85"/>
<line x1="879.6" y1="434.6" x2="1600.4" y2="201.0" stroke="#a89f8c" stroke-width="0.8" opacity="0.8"/>
<polygon points="882.5,437.6 884.9,440.2 1604.0,204.9 1602.4,203.1" fill="#a2a4a6" fill-opacity="0.85"/>
<line x1="882.5" y1="437.6" x2="1602.4" y2="203.1" stroke="#a89f8c" stroke-width="0.8" opacity="0.8"/>
<polygon points="884.9,440.2 886.7,442.1 1605.3,206.2 1604.0,204.9" fill="#b8babc" fill-opacity="0.85"/>
<line x1="884.9" y1="440.2" x2="1604.0" y2="204.9" stroke="#a89f8c" stroke-width="0.8" opacity="0.8"/>
<polygon points="886.7,442.1 889.2,444.7 1607.0,208.1 1605.3,206.2" fill="#bfc1c3" fill-opacity="0.85"/>
<line x1="886.7" y1="442.1" x2="1605.3" y2="206.2" stroke="#a89f8c" stroke-width="0.8" opacity="0.8"/>
<polygon points="889.2,444.7 891.0,446.6 1608.3,209.5 1607.0,208.1" fill="#bcbec0" fill-opacity="0.85"/>
<polygon points="891.0,446.6 893.1,448.9 1609.8,211.0 1608.3,209.5" fill="#a8aaac" fill-opacity="0.85"/>
<line x1="891.0" y1="446.6" x2="1608.3" y2="209.5" stroke="#a89f8c" stroke-width="0.8" opacity="0.8"/>
<polygon points="893.1,448.9 896.3,452.3 1612.0,213.4 1609.8,211.0" fill="#c6c8c9" fill-opacity="0.85"/>
<polygon points="896.3,452.3 898.8,455.0 1613.7,215.3 1612.0,213.4" fill="#b0b2b4" fill-opacity="0.85"/>
<polygon points="898.8,455.0 900.1,456.4 1614.6,216.3 1613.7,215.3" fill="#c6c8c9" fill-opacity="0.85"/>
<polygon points="900.1,456.4 901.0,457.4 1615.3,217.0 1614.6,216.3" fill="#a8aaac" fill-opacity="0.85"/>
<line x1="900.1" y1="456.4" x2="1614.6" y2="216.3" stroke="#a89f8c" stroke-width="0.8" opacity="0.8"/>
<polygon points="901.0,457.4 902.2,458.6 1616.1,217.8 1615.3,217.0" fill="#b8babc" fill-opacity="0.85"/>
<polygon points="902.2,458.6 904.9,461.5 1618.0,219.9 1616.1,217.8" fill="#a8aaac" fill-opacity="0.85"/>
<polygon points="904.9,461.5 906.1,462.9 1618.9,220.8 1618.0,219.9" fill="#bfc1c3" fill-opacity="0.85"/>
<polygon points="906.1,462.9 907.6,464.4 1619.9,221.9 1618.9,220.8" fill="#a2a4a6" fill-opacity="0.85"/>
<polygon points="907.6,464.4 908.5,465.3 1620.5,222.5 1619.9,221.9" fill="#b4b6b8" fill-opacity="0.85"/>
<line x1="907.6" y1="464.4" x2="1619.9" y2="221.9" stroke="#a89f8c" stroke-width="0.8" opacity="0.8"/>
<polygon points="908.5,465.3 911.4,468.5 1622.6,224.7 1620.5,222.5" fill="#b8babc" fill-opacity="0.85"/>
<polygon points="911.4,468.5 914.3,471.5 1624.6,226.9 1622.6,224.7" fill="#bfc1c3" fill-opacity="0.85"/>
<polygon points="914.3,471.5 916.4,473.8 1626.1,228.5 1624.6,226.9" fill="#a8aaac" fill-opacity="0.85"/>
<polygon points="916.4,473.8 918.2,475.7 1627.3,229.8 1626.1,228.5" fill="#b4b6b8" fill-opacity="0.85"/>
<polygon points="918.2,475.7 921.4,479.2 1629.6,232.2 1627.3,229.8" fill="#b4b6b8" fill-opacity="0.85"/>
<line x1="918.2" y1="475.7" x2="1627.3" y2="229.8" stroke="#a89f8c" stroke-width="0.8" opacity="0.8"/>
<polygon points="921.4,479.2 922.9,480.8 1630.6,233.3 1629.6,232.2" fill="#b8babc" fill-opacity="0.85"/>
<line x1="921.4" y1="479.2" x2="1629.6" y2="232.2" stroke="#a89f8c" stroke-width="0.8" opacity="0.8"/>
<polygon points="922.9,480.8 923.8,481.8 1631.3,234.0 1630.6,233.3" fill="#bcbec0" fill-opacity="0.85"/>
<polygon points="923.8,481.8 925.7,483.7 1632.6,235.4 1631.3,234.0" fill="#b4b6b8" fill-opacity="0.85"/>
<polyline points="745,330 800,300 860,262 925,235" stroke="#8d8f91" stroke-width="10" fill="none" opacity="0.4" filter="url(#b4)"/>
<polyline points="708,258 790,236 870,222" stroke="#d5d7d8" stroke-width="5" fill="none" opacity="0.45" filter="url(#b2)"/>
<polyline points="850,420 925,360" stroke="#d8d9da" stroke-width="16" fill="none" opacity="0.35" filter="url(#b4)"/>
<g stroke="#161616" stroke-width="0.85">
<line x1="744.8" y1="292.3" x2="1506.0" y2="101.4" />
<line x1="763.5" y1="312.0" x2="1519.0" y2="115.2" />
<line x1="785.8" y1="333.3" x2="1534.7" y2="130.1" />
<line x1="809.5" y1="357.4" x2="1551.2" y2="147.0" />
<line x1="831.8" y1="385.0" x2="1566.9" y2="166.3" />
<line x1="858.2" y1="411.4" x2="1585.3" y2="184.8" />
<line x1="884.6" y1="439.7" x2="1603.8" y2="204.6" />
<line x1="909.2" y1="466.1" x2="1621.0" y2="223.1" />
</g>
</g>
<g clip-path="url(#cgf)">
<polygon points="708.1,251.3 709.0,252.3 650.8,490.4 650.1,489.6" fill="#8b8e91" fill-opacity="0.9"/>
<polygon points="709.0,252.3 712.6,256.1 653.7,493.5 650.8,490.4" fill="#939699" fill-opacity="0.9"/>
<polygon points="712.6,256.1 716.5,260.2 656.8,496.8 653.7,493.5" fill="#8f9295" fill-opacity="0.9"/>
<polygon points="716.5,260.2 719.5,263.5 659.2,499.4 656.8,496.8" fill="#8f9295" fill-opacity="0.9"/>
<polygon points="719.5,263.5 720.4,264.4 659.9,500.1 659.2,499.4" fill="#878a8d" fill-opacity="0.9"/>
<polygon points="720.4,264.4 722.0,266.2 661.2,501.5 659.9,500.1" fill="#8b8e91" fill-opacity="0.9"/>
<polygon points="722.0,266.2 723.6,267.9 662.5,502.9 661.2,501.5" fill="#878a8d" fill-opacity="0.9"/>
<polygon points="723.6,267.9 726.3,270.7 664.6,505.2 662.5,502.9" fill="#878a8d" fill-opacity="0.9"/>
<polygon points="726.3,270.7 730.0,274.7 667.6,508.4 664.6,505.2" fill="#8b8e91" fill-opacity="0.9"/>
<polygon points="730.0,274.7 732.0,276.8 669.2,510.0 667.6,508.4" fill="#939699" fill-opacity="0.9"/>
<line x1="730.0" y1="274.7" x2="667.6" y2="508.4" stroke="#9f9684" stroke-width="0.8" opacity="0.85"/>
<polygon points="732.0,276.8 732.9,277.8 669.9,510.9 669.2,510.0" fill="#939699" fill-opacity="0.9"/>
<line x1="732.0" y1="276.8" x2="669.2" y2="510.0" stroke="#9f9684" stroke-width="0.8" opacity="0.85"/>
<polygon points="732.9,277.8 735.8,280.9 672.3,513.3 669.9,510.9" fill="#a9acae" fill-opacity="0.9"/>
<line x1="732.9" y1="277.8" x2="669.9" y2="510.9" stroke="#9f9684" stroke-width="0.8" opacity="0.85"/>
<polygon points="735.8,280.9 737.7,283.0 673.8,515.0 672.3,513.3" fill="#a9acae" fill-opacity="0.9"/>
<line x1="735.8" y1="280.9" x2="672.3" y2="513.3" stroke="#9f9684" stroke-width="0.8" opacity="0.85"/>
<polygon points="737.7,283.0 739.9,285.3 675.6,516.9 673.8,515.0" fill="#8f9295" fill-opacity="0.9"/>
<line x1="737.7" y1="283.0" x2="673.8" y2="515.0" stroke="#9f9684" stroke-width="0.8" opacity="0.85"/>
<polygon points="739.9,285.3 741.7,287.2 677.0,518.4 675.6,516.9" fill="#939699" fill-opacity="0.9"/>
<line x1="739.9" y1="285.3" x2="675.6" y2="516.9" stroke="#9f9684" stroke-width="0.8" opacity="0.85"/>
<polygon points="741.7,287.2 743.4,289.0 678.3,519.8 677.0,518.4" fill="#a9acae" fill-opacity="0.9"/>
<polygon points="743.4,289.0 745.9,291.6 680.3,521.9 678.3,519.8" fill="#8b8e91" fill-opacity="0.9"/>
<polygon points="745.9,291.6 749.3,295.3 683.0,524.8 680.3,521.9" fill="#878a8d" fill-opacity="0.9"/>
<line x1="745.9" y1="291.6" x2="680.3" y2="521.9" stroke="#9f9684" stroke-width="0.8" opacity="0.85"/>
<polygon points="749.3,295.3 752.2,298.4 685.3,527.3 683.0,524.8" fill="#878a8d" fill-opacity="0.9"/>
<polygon points="752.2,298.4 755.8,302.3 688.3,530.4 685.3,527.3" fill="#939699" fill-opacity="0.9"/>
<polygon points="755.8,302.3 757.4,304.0 689.5,531.8 688.3,530.4" fill="#a9acae" fill-opacity="0.9"/>
<polygon points="757.4,304.0 759.4,306.1 691.1,533.4 689.5,531.8" fill="#8b8e91" fill-opacity="0.9"/>
<line x1="757.4" y1="304.0" x2="689.5" y2="531.8" stroke="#9f9684" stroke-width="0.8" opacity="0.85"/>
<polygon points="759.4,306.1 761.8,308.7 693.1,535.5 691.1,533.4" fill="#8b8e91" fill-opacity="0.9"/>
<line x1="759.4" y1="306.1" x2="691.1" y2="533.4" stroke="#9f9684" stroke-width="0.8" opacity="0.85"/>
<polygon points="761.8,308.7 764.9,312.0 695.5,538.2 693.1,535.5" fill="#8f9295" fill-opacity="0.9"/>
<polygon points="764.9,312.0 768.1,315.4 698.1,540.9 695.5,538.2" fill="#8f9295" fill-opacity="0.9"/>
<polygon points="768.1,315.4 769.0,316.3 698.8,541.7 698.1,540.9" fill="#8b8e91" fill-opacity="0.9"/>
<line x1="768.1" y1="315.4" x2="698.1" y2="540.9" stroke="#9f9684" stroke-width="0.8" opacity="0.85"/>
<polygon points="769.0,316.3 771.5,319.0 700.8,543.8 698.8,541.7" fill="#8b8e91" fill-opacity="0.9"/>
<line x1="769.0" y1="316.3" x2="698.8" y2="541.7" stroke="#9f9684" stroke-width="0.8" opacity="0.85"/>
<polygon points="771.5,319.0 773.2,320.8 702.1,545.2 700.8,543.8" fill="#a9acae" fill-opacity="0.9"/>
<polygon points="773.2,320.8 775.6,323.4 704.1,547.4 702.1,545.2" fill="#979a9d" fill-opacity="0.9"/>
<polygon points="775.6,323.4 779.4,327.5 707.1,550.6 704.1,547.4" fill="#a9acae" fill-opacity="0.9"/>
<polygon points="779.4,327.5 782.5,330.8 709.6,553.2 707.1,550.6" fill="#a9acae" fill-opacity="0.9"/>
<polygon points="782.5,330.8 785.8,334.3 712.2,556.0 709.6,553.2" fill="#7f8285" fill-opacity="0.9"/>
<polygon points="785.8,334.3 788.2,336.9 714.2,558.1 712.2,556.0" fill="#7f8285" fill-opacity="0.9"/>
<polygon points="788.2,336.9 790.5,339.3 716.0,560.1 714.2,558.1" fill="#878a8d" fill-opacity="0.9"/>
<polygon points="790.5,339.3 792.9,341.9 717.9,562.1 716.0,560.1" fill="#878a8d" fill-opacity="0.9"/>
<polygon points="792.9,341.9 794.5,343.5 719.2,563.4 717.9,562.1" fill="#8b8e91" fill-opacity="0.9"/>
<polygon points="794.5,343.5 798.3,347.7 722.3,566.8 719.2,563.4" fill="#9fa2a5" fill-opacity="0.9"/>
<polygon points="798.3,347.7 801.2,350.8 724.6,569.2 722.3,566.8" fill="#8b8e91" fill-opacity="0.9"/>
<line x1="798.3" y1="347.7" x2="722.3" y2="566.8" stroke="#9f9684" stroke-width="0.8" opacity="0.85"/>
<polygon points="801.2,350.8 803.1,352.8 726.1,570.8 724.6,569.2" fill="#939699" fill-opacity="0.9"/>
<polygon points="803.1,352.8 805.1,355.0 727.7,572.6 726.1,570.8" fill="#939699" fill-opacity="0.9"/>
<polygon points="805.1,355.0 807.6,357.6 729.7,574.7 727.7,572.6" fill="#7f8285" fill-opacity="0.9"/>
<line x1="805.1" y1="355.0" x2="727.7" y2="572.6" stroke="#9f9684" stroke-width="0.8" opacity="0.85"/>
<polygon points="807.6,357.6 811.1,361.3 732.5,577.6 729.7,574.7" fill="#878a8d" fill-opacity="0.9"/>
<polygon points="811.1,361.3 814.8,365.3 735.4,580.8 732.5,577.6" fill="#8f9295" fill-opacity="0.9"/>
<polygon points="814.8,365.3 818.3,369.0 738.3,583.8 735.4,580.8" fill="#939699" fill-opacity="0.9"/>
<polygon points="818.3,369.0 822.2,373.2 741.3,587.1 738.3,583.8" fill="#a9acae" fill-opacity="0.9"/>
<polygon points="822.2,373.2 823.2,374.3 742.2,588.0 741.3,587.1" fill="#8b8e91" fill-opacity="0.9"/>
<line x1="822.2" y1="373.2" x2="741.3" y2="587.1" stroke="#9f9684" stroke-width="0.8" opacity="0.85"/>
<polygon points="823.2,374.3 826.6,377.8 744.9,590.9 742.2,588.0" fill="#939699" fill-opacity="0.9"/>
<line x1="823.2" y1="374.3" x2="742.2" y2="588.0" stroke="#9f9684" stroke-width="0.8" opacity="0.85"/>
<polygon points="826.6,377.8 828.5,379.9 746.4,592.5 744.9,590.9" fill="#7f8285" fill-opacity="0.9"/>
<line x1="826.6" y1="377.8" x2="744.9" y2="590.9" stroke="#9f9684" stroke-width="0.8" opacity="0.85"/>
<polygon points="828.5,379.9 831.9,383.6 749.1,595.4 746.4,592.5" fill="#979a9d" fill-opacity="0.9"/>
<polygon points="831.9,383.6 835.6,387.5 752.0,598.6 749.1,595.4" fill="#979a9d" fill-opacity="0.9"/>
<polygon points="835.6,387.5 838.8,390.9 754.6,601.3 752.0,598.6" fill="#939699" fill-opacity="0.9"/>
<polygon points="838.8,390.9 840.1,392.3 755.6,602.4 754.6,601.3" fill="#939699" fill-opacity="0.9"/>
<line x1="838.8" y1="390.9" x2="754.6" y2="601.3" stroke="#9f9684" stroke-width="0.8" opacity="0.85"/>
<polygon points="840.1,392.3 843.7,396.1 758.5,605.5 755.6,602.4" fill="#939699" fill-opacity="0.9"/>
<polygon points="843.7,396.1 847.1,399.8 761.3,608.4 758.5,605.5" fill="#878a8d" fill-opacity="0.9"/>
<line x1="843.7" y1="396.1" x2="758.5" y2="605.5" stroke="#9f9684" stroke-width="0.8" opacity="0.85"/>
<polygon points="847.1,399.8 848.5,401.3 762.4,609.6 761.3,608.4" fill="#939699" fill-opacity="0.9"/>
<polygon points="848.5,401.3 849.5,402.4 763.2,610.5 762.4,609.6" fill="#979a9d" fill-opacity="0.9"/>
<line x1="848.5" y1="401.3" x2="762.4" y2="609.6" stroke="#9f9684" stroke-width="0.8" opacity="0.85"/>
<polygon points="849.5,402.4 851.0,403.9 764.4,611.8 763.2,610.5" fill="#8b8e91" fill-opacity="0.9"/>
<polygon points="851.0,403.9 854.8,408.0 767.4,615.0 764.4,611.8" fill="#8b8e91" fill-opacity="0.9"/>
<polygon points="854.8,408.0 858.2,411.7 770.2,617.9 767.4,615.0" fill="#8f9295" fill-opacity="0.9"/>
<polygon points="858.2,411.7 860.3,413.8 771.8,619.7 770.2,617.9" fill="#878a8d" fill-opacity="0.9"/>
<polygon points="860.3,413.8 861.8,415.4 773.0,621.0 771.8,619.7" fill="#9fa2a5" fill-opacity="0.9"/>
<polygon points="861.8,415.4 862.8,416.6 773.8,621.9 773.0,621.0" fill="#8b8e91" fill-opacity="0.9"/>
<line x1="861.8" y1="415.4" x2="773.0" y2="621.0" stroke="#9f9684" stroke-width="0.8" opacity="0.85"/>
<polygon points="862.8,416.6 865.4,419.3 775.9,624.1 773.8,621.9" fill="#878a8d" fill-opacity="0.9"/>
<polygon points="865.4,419.3 869.0,423.2 778.8,627.2 775.9,624.1" fill="#878a8d" fill-opacity="0.9"/>
<polygon points="869.0,423.2 870.5,424.8 780.0,628.4 778.8,627.2" fill="#878a8d" fill-opacity="0.9"/>
<polygon points="870.5,424.8 872.8,427.2 781.8,630.4 780.0,628.4" fill="#a9acae" fill-opacity="0.9"/>
<polygon points="872.8,427.2 874.1,428.6 782.9,631.5 781.8,630.4" fill="#a9acae" fill-opacity="0.9"/>
<line x1="872.8" y1="427.2" x2="781.8" y2="630.4" stroke="#9f9684" stroke-width="0.8" opacity="0.85"/>
<polygon points="874.1,428.6 876.3,430.9 784.6,633.4 782.9,631.5" fill="#878a8d" fill-opacity="0.9"/>
<polygon points="876.3,430.9 878.2,433.0 786.1,635.0 784.6,633.4" fill="#939699" fill-opacity="0.9"/>
<polygon points="878.2,433.0 880.4,435.3 787.9,636.9 786.1,635.0" fill="#9fa2a5" fill-opacity="0.9"/>
<polygon points="880.4,435.3 882.4,437.5 789.5,638.6 787.9,636.9" fill="#a9acae" fill-opacity="0.9"/>
<line x1="880.4" y1="435.3" x2="787.9" y2="636.9" stroke="#9f9684" stroke-width="0.8" opacity="0.85"/>
<polygon points="882.4,437.5 885.9,441.2 792.3,641.6 789.5,638.6" fill="#a9acae" fill-opacity="0.9"/>
<polygon points="885.9,441.2 888.4,443.9 794.4,643.8 792.3,641.6" fill="#8b8e91" fill-opacity="0.9"/>
<polygon points="888.4,443.9 889.6,445.1 795.2,644.7 794.4,643.8" fill="#939699" fill-opacity="0.9"/>
<polygon points="889.6,445.1 893.4,449.2 798.3,648.0 795.2,644.7" fill="#8b8e91" fill-opacity="0.9"/>
<polygon points="893.4,449.2 895.5,451.5 800.0,649.8 798.3,648.0" fill="#7f8285" fill-opacity="0.9"/>
<polygon points="895.5,451.5 897.7,453.8 801.8,651.7 800.0,649.8" fill="#8b8e91" fill-opacity="0.9"/>
<line x1="895.5" y1="451.5" x2="800.0" y2="649.8" stroke="#9f9684" stroke-width="0.8" opacity="0.85"/>
<polygon points="897.7,453.8 901.5,457.9 804.8,654.9 801.8,651.7" fill="#8b8e91" fill-opacity="0.9"/>
<line x1="897.7" y1="453.8" x2="801.8" y2="651.7" stroke="#9f9684" stroke-width="0.8" opacity="0.85"/>
<polygon points="901.5,457.9 905.3,462.0 807.9,658.2 804.8,654.9" fill="#7f8285" fill-opacity="0.9"/>
<line x1="901.5" y1="457.9" x2="804.8" y2="654.9" stroke="#9f9684" stroke-width="0.8" opacity="0.85"/>
<polygon points="905.3,462.0 908.4,465.3 810.3,660.8 807.9,658.2" fill="#8f9295" fill-opacity="0.9"/>
<polygon points="908.4,465.3 911.9,469.1 813.2,663.8 810.3,660.8" fill="#8f9295" fill-opacity="0.9"/>
<polygon points="911.9,469.1 913.3,470.5 814.2,665.0 813.2,663.8" fill="#9fa2a5" fill-opacity="0.9"/>
<line x1="911.9" y1="469.1" x2="813.2" y2="663.8" stroke="#9f9684" stroke-width="0.8" opacity="0.85"/>
<polygon points="913.3,470.5 914.5,471.8 815.2,666.0 814.2,665.0" fill="#878a8d" fill-opacity="0.9"/>
<polygon points="914.5,471.8 915.5,472.8 816.0,666.9 815.2,666.0" fill="#979a9d" fill-opacity="0.9"/>
<polygon points="915.5,472.8 917.0,474.4 817.2,668.1 816.0,666.9" fill="#9fa2a5" fill-opacity="0.9"/>
<polygon points="917.0,474.4 918.6,476.1 818.5,669.5 817.2,668.1" fill="#7f8285" fill-opacity="0.9"/>
<polygon points="918.6,476.1 922.1,479.9 821.2,672.5 818.5,669.5" fill="#878a8d" fill-opacity="0.9"/>
<polygon points="922.1,479.9 925.2,483.2 823.8,675.2 821.2,672.5" fill="#8f9295" fill-opacity="0.9"/>
<line x1="922.1" y1="479.9" x2="821.2" y2="672.5" stroke="#9f9684" stroke-width="0.8" opacity="0.85"/>
<polyline points="686,336 719.7,380 762,431 804.5,482 807,485" stroke="#857a64" stroke-width="3.5" fill="none" opacity="0.55" filter="url(#b1)"/>
<g stroke="#161616" stroke-width="0.85">
<line x1="744.8" y1="292.3" x2="679.4" y2="522.4" />
<line x1="763.5" y1="312.0" x2="694.4" y2="538.2" />
<line x1="785.8" y1="333.3" x2="712.2" y2="555.2" />
<line x1="809.5" y1="357.4" x2="731.2" y2="574.5" />
<line x1="831.8" y1="385.0" x2="749.0" y2="596.6" />
<line x1="858.2" y1="411.4" x2="770.2" y2="617.7" />
<line x1="884.6" y1="439.7" x2="791.3" y2="640.4" />
<line x1="909.2" y1="466.1" x2="811.0" y2="661.5" />
<polyline points="690.6,323.1 740.9,380 782,431 823,482 825,484.5" fill="none"/>
</g>
</g>
<polyline points="861.8,215.4 925.0,265.0" stroke="#161616" stroke-width="1" fill="none" opacity="0.25"/>
<polyline points="674.3,386.2 749.0,483.0" stroke="#161616" stroke-width="1" fill="none" opacity="0.8"/>
<polyline points="708.1,251.3 925.0,483.0" stroke="#2a2a2a" stroke-width="1" fill="none" opacity="0.7"/>
<g stroke="#ff8a1a" stroke-width="1" fill="none" opacity="0.95">
<line x1="498.2" y1="165.5" x2="500.0" y2="82.7" />
<line x1="518.4" y1="167.4" x2="532.0" y2="85.3" />
<line x1="537.9" y1="170.0" x2="564.0" y2="89.2" />
<line x1="557.5" y1="173.5" x2="595.0" y2="94.2" />
<line x1="576.9" y1="178.5" x2="627.0" y2="100.5" />
<line x1="595.6" y1="184.6" x2="658.4" y2="109.2" />
<line x1="614.2" y1="192.0" x2="689.7" y2="119.0" />
<line x1="632.0" y1="199.8" x2="720.0" y2="130.8" />
<line x1="649.3" y1="208.0" x2="750.5" y2="144.2" />
<line x1="665.7" y1="218.1" x2="780.0" y2="159.7" />
<line x1="681.0" y1="229.0" x2="808.2" y2="176.5" />
<line x1="695.5" y1="239.7" x2="836.2" y2="195.5" />
<line x1="498.2" y1="165.5" x2="488.6" y2="295.2" />
<line x1="518.4" y1="167.4" x2="506.3" y2="297.3" />
<line x1="537.9" y1="170.0" x2="524.1" y2="300.4" />
<line x1="557.5" y1="173.5" x2="541.9" y2="304.2" />
<line x1="576.9" y1="178.5" x2="559.6" y2="309.1" />
<line x1="595.6" y1="184.6" x2="576.0" y2="314.2" />
<line x1="614.2" y1="192.0" x2="592.4" y2="321.5" />
<line x1="632.0" y1="199.8" x2="608.6" y2="328.9" />
<line x1="649.3" y1="208.0" x2="624.3" y2="338.0" />
<line x1="665.7" y1="218.1" x2="638.3" y2="348.3" />
<line x1="681.0" y1="229.0" x2="651.9" y2="360.0" />
<line x1="695.5" y1="239.7" x2="663.9" y2="372.5" />
<polyline points="108.1,65.8 230.0,70.9 420.0,79.3 500.0,82.7 532.0,85.3 564.0,89.2 595.0,94.2 627.0,100.5 658.4,109.2 689.7,119.0 720.0,130.8 750.5,144.2 780.0,159.7 808.2,176.5 836.2,195.5 861.8,215.4"/>
<polyline points="91.7,272.6 300.0,285.8 403.8,291.7 488.6,295.2 506.3,297.3 524.1,300.4 541.9,304.2 559.6,309.1 576.0,314.2 592.4,321.5 608.6,328.9 624.3,338.0 638.3,348.3 651.9,360.0 663.9,372.5 674.3,386.2"/>
<polyline points="75.3,211.8 240.0,221.0 380.0,227.8 431.9,230.6 493.4,234.3 512.3,235.8 530.5,238.4 548.7,241.5 566.8,246.2 585.0,252.4 603.1,259.7 620.0,268.0 635.0,277.6 652.0,290.0 667.0,304.0 680.0,314.0 690.6,323.1"/>
<path d="M500.0 82.7l-2 4.5m2 -4.5l2 4.5" stroke-width="1.2"/>
<path d="M532.0 85.3l-2 4.5m2 -4.5l2 4.5" stroke-width="1.2"/>
<path d="M564.0 89.2l-2 4.5m2 -4.5l2 4.5" stroke-width="1.2"/>
<path d="M595.0 94.2l-2 4.5m2 -4.5l2 4.5" stroke-width="1.2"/>
<path d="M627.0 100.5l-2 4.5m2 -4.5l2 4.5" stroke-width="1.2"/>
<path d="M658.4 109.2l-2 4.5m2 -4.5l2 4.5" stroke-width="1.2"/>
<path d="M689.7 119.0l-2 4.5m2 -4.5l2 4.5" stroke-width="1.2"/>
<path d="M720.0 130.8l-2 4.5m2 -4.5l2 4.5" stroke-width="1.2"/>
<path d="M750.5 144.2l-2 4.5m2 -4.5l2 4.5" stroke-width="1.2"/>
<path d="M780.0 159.7l-2 4.5m2 -4.5l2 4.5" stroke-width="1.2"/>
<path d="M808.2 176.5l-2 4.5m2 -4.5l2 4.5" stroke-width="1.2"/>
<path d="M836.2 195.5l-2 4.5m2 -4.5l2 4.5" stroke-width="1.2"/>
<path d="M861.8 215.4l-2 4.5m2 -4.5l2 4.5" stroke-width="1.2"/>
<path d="M488.6 295.2l-2.2 -4.5m2.2 4.5l2.2 -4.5" stroke-width="1.2"/>
<path d="M506.3 297.3l-2.2 -4.5m2.2 4.5l2.2 -4.5" stroke-width="1.2"/>
<path d="M524.1 300.4l-2.2 -4.5m2.2 4.5l2.2 -4.5" stroke-width="1.2"/>
<path d="M541.9 304.2l-2.2 -4.5m2.2 4.5l2.2 -4.5" stroke-width="1.2"/>
<path d="M559.6 309.1l-2.2 -4.5m2.2 4.5l2.2 -4.5" stroke-width="1.2"/>
<path d="M576.0 314.2l-2.2 -4.5m2.2 4.5l2.2 -4.5" stroke-width="1.2"/>
<path d="M592.4 321.5l-2.2 -4.5m2.2 4.5l2.2 -4.5" stroke-width="1.2"/>
<path d="M608.6 328.9l-2.2 -4.5m2.2 4.5l2.2 -4.5" stroke-width="1.2"/>
<path d="M624.3 338.0l-2.2 -4.5m2.2 4.5l2.2 -4.5" stroke-width="1.2"/>
<path d="M638.3 348.3l-2.2 -4.5m2.2 4.5l2.2 -4.5" stroke-width="1.2"/>
<path d="M651.9 360.0l-2.2 -4.5m2.2 4.5l2.2 -4.5" stroke-width="1.2"/>
<path d="M663.9 372.5l-2.2 -4.5m2.2 4.5l2.2 -4.5" stroke-width="1.2"/>
<path d="M674.3 386.2l-2.2 -4.5m2.2 4.5l2.2 -4.5" stroke-width="1.2"/>
</g>
<polyline points="56.5,144.1 230.0,152.4 430.0,161.7 498.2,165.5 518.4,167.4 537.9,170.0 557.5,173.5 576.9,178.5 595.6,184.6 614.2,192.0 632.0,199.8 649.3,208.0 665.7,218.1 681.0,229.0 695.5,239.7 708.1,251.3" stroke="#e23a1c" stroke-width="2.9" fill="none" stroke-linejoin="round"/>
<polyline points="56.5,144.1 108.1,65.8" stroke="#e23a1c" stroke-width="2.9" fill="none" stroke-linejoin="round"/>
<polyline points="56.5,144.1 91.7,272.6" stroke="#e23a1c" stroke-width="2.9" fill="none" stroke-linejoin="round"/>
<polyline points="708.1,251.3 861.8,215.4" stroke="#e23a1c" stroke-width="2.9" fill="none" stroke-linejoin="round"/>
<polyline points="708.1,251.3 674.3,386.2" stroke="#e23a1c" stroke-width="2.9" fill="none" stroke-linejoin="round"/>
<polyline points="56.5,144.1 230.0,152.4 430.0,161.7 498.2,165.5 518.4,167.4 537.9,170.0 557.5,173.5 576.9,178.5 595.6,184.6 614.2,192.0 632.0,199.8 649.3,208.0 665.7,218.1 681.0,229.0 695.5,239.7 708.1,251.3" stroke="#ff9210" stroke-width="1.3" fill="none" stroke-linejoin="round"/>
<polyline points="56.5,144.1 108.1,65.8" stroke="#ff9210" stroke-width="1.3" fill="none" stroke-linejoin="round"/>
<polyline points="56.5,144.1 91.7,272.6" stroke="#ff9210" stroke-width="1.3" fill="none" stroke-linejoin="round"/>
<polyline points="708.1,251.3 861.8,215.4" stroke="#ff9210" stroke-width="1.3" fill="none" stroke-linejoin="round"/>
<polyline points="708.1,251.3 674.3,386.2" stroke="#ff9210" stroke-width="1.3" fill="none" stroke-linejoin="round"/>
<path d="M108.1 65.8L108.6 72.5M108.1 65.8L111.2 72.5" stroke="#ff6a10" stroke-width="1.4" fill="none"/>
<path d="M91.7 272.6L93.8 266M91.7 272.6L96 267.5" stroke="#ff6a10" stroke-width="1.2" fill="none"/>
<path d="M674.3 386.2L676.8 380M674.3 386.2L679.5 382.5" stroke="#ff6a10" stroke-width="1.2" fill="none"/>
<path d="M861.8 215.4L859.5 221.5M861.8 215.4L863.3 222" stroke="#ff6a10" stroke-width="1.2" fill="none"/>
<g stroke="#1a1a1a" stroke-width="1" fill="none">
<line x1="74.2" y1="205.1" x2="77.7" y2="210.4" />
<path d="M707.2 426.5l-2 -3.5m2 3.5l2.2 -3"/>
<path d="M723.4 448.0l-2 -3.5m2 3.5l2.2 -3"/>
<path d="M741.2 471.8l-2 -3.5m2 3.5l2.2 -3"/>
<path d="M905.6 252l-2.5 2.5m2.5 -2.5l0.5 4"/>
</g>
<g fill="none">
<circle cx="764.5" cy="303.3" r="14.4" stroke="#f2f2f2" stroke-width="1.5"/>
<circle cx="764.5" cy="303.3" r="14.4" stroke="#ee3338" stroke-width="1.5" stroke-dasharray="5.65 5.65" stroke-dashoffset="1.13"/>
<g stroke="#111" stroke-width="1.1">
<line x1="757.2" y1="286.4" x2="762.4" y2="297.2" />
<line x1="770.9" y1="286.4" x2="767.3" y2="297.2" />
<line x1="741.3" y1="304.4" x2="757.2" y2="302.9" />
<line x1="772.1" y1="302.4" x2="788.6" y2="302.0" />
<line x1="761.8" y1="310.3" x2="758.4" y2="319.5" />
<line x1="767.3" y1="308.6" x2="772.1" y2="320.0" />
</g>
<line x1="755.3" y1="282.1" x2="757.0" y2="286.0" stroke="#3f7fe0" stroke-width="1.5"/>
<line x1="772.6" y1="283.2" x2="771.1" y2="286.6" stroke="#6fc01f" stroke-width="1.5"/>
<line x1="736.1" y1="304.7" x2="741.0" y2="304.4" stroke="#ee4a55" stroke-width="1.5"/>
<line x1="788.8" y1="301.9" x2="793.0" y2="301.8" stroke="#ee4a55" stroke-width="1.5"/>
<line x1="772.3" y1="320.6" x2="774.7" y2="324.8" stroke="#3f7fe0" stroke-width="1.5"/>
<line x1="758.2" y1="319.8" x2="757.2" y2="322.8" stroke="#6fc01f" stroke-width="1.5"/>
</g>
<g>
<circle cx="592.1" cy="224.4" r="22.4" fill="none" stroke="#f1efee" stroke-width="2.2" opacity="0.95"/>
<polygon points="566.5,127 574.8,137.5 573,148.5 565.5,138" fill="#f2555f" fill-opacity="0.4" stroke="#f2555f" stroke-width="1" stroke-opacity="0.7"/>
<polygon points="651.2,153.1 667.2,150.5 663.5,164.8 649.6,167.4" fill="#8fd03a" fill-opacity="0.45" stroke="#8fd03a" stroke-width="1" stroke-opacity="0.7"/>
<polygon points="607,175.7 619.7,173.1 628,179.7 614.7,184" fill="#6c93ee" fill-opacity="0.4" stroke="#5f8df0" stroke-width="1" stroke-opacity="0.7"/>
<line x1="581.5" y1="211.3" x2="544.9" y2="168.8" stroke="#8fd63a" stroke-width="2.4" opacity="0.75"/>
<polygon points="532.3,152.1 548.2,161.2 538.2,170.4" fill="#86d229"/>
<line x1="594.8" y1="204.6" x2="607.0" y2="128.2" stroke="#6596f5" stroke-width="2.4" opacity="0.72"/>
<polygon points="609.7,101 613.8,127.3 600.6,125.3" fill="#4f8bf7"/>
<ellipse cx="607.2" cy="126.6" rx="6.7" ry="2.4" fill="#4f8bf7" transform="rotate(8 607.2 126.6)"/>
<line x1="612.4" y1="218.6" x2="687.8" y2="203.0" stroke="#f8607a" stroke-width="2.4" opacity="0.7"/>
<polygon points="712.7,198 690.6,208.5 687.8,196.2" fill="#f74d60"/>
</g>
</svg></body></html>
